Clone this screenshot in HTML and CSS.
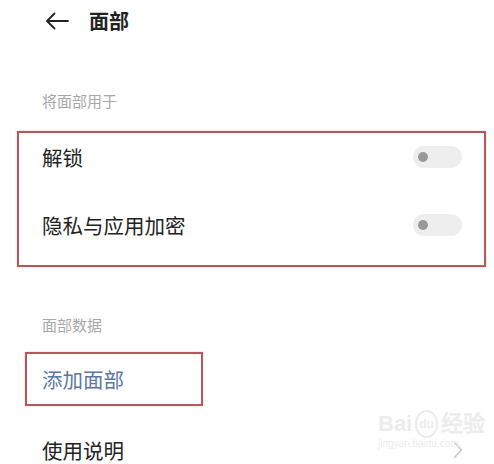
FILE: index.html
```html
<!DOCTYPE html>
<html lang="zh-CN">
<head>
  <meta charset="UTF-8">
  <meta name="viewport" content="width=device-width, initial-scale=1.0">
  <title>面部</title>
  <link rel="stylesheet" href="styles.css">
</head>
<body>
  <div class="header">
    <svg class="back" width="24" height="18" viewBox="0 0 24 18">
      <path d="M23 9H2M9.5 1.5L2 9l7.5 7.5" fill="none" stroke="#222" stroke-width="1.8" stroke-linecap="round" stroke-linejoin="round"/>
    </svg>
    <div class="title">面部</div>
  </div>

  <div class="section-title first">将面部用于</div>
  <div class="mark-box use-box">
    <div class="row">
      <span class="row-text">解锁</span>
      <span class="toggle"><span class="knob"></span></span>
    </div>
    <div class="row">
      <span class="row-text">隐私与应用加密</span>
      <span class="toggle"><span class="knob"></span></span>
    </div>
  </div>

  <div class="section-title second">面部数据</div>
  <div class="mark-box add-box">
    <span class="row-text link">添加面部</span>
  </div>

  <div class="row help-row">
    <span class="row-text">使用说明</span>
    <svg class="chevron" width="10" height="18" viewBox="0 0 10 18">
      <path d="M1.5 1.5L8.5 9l-7 7.5" fill="none" stroke="#c8c8c8" stroke-width="1.6" stroke-linecap="round" stroke-linejoin="round"/>
    </svg>
  </div>

  <div class="watermark">
    <div class="wm-top">Bai<span class="wm-paw">du</span>经验</div>
    <div class="wm-url">jingyan.baidu.com</div>
  </div>
</body>
</html>
```

FILE: styles.css
```css
body {
  margin: 0;
  background: #ffffff;
  color: #222222;
  font-family: "Noto Sans CJK SC", "Noto Sans", sans-serif;
  height: 464px;
  overflow: hidden;
  position: relative;
}
.header {
  height: 42px;
  display: flex;
  align-items: center;
  padding-left: 45px;
  gap: 20px;
}
.title {
  font-size: 20px;
  font-weight: 600;
  line-height: 24px;
}
.section-title {
  font-size: 15px;
  line-height: 20px;
  color: #a8a8a8;
  padding-left: 42px;
}
.section-title.first {
  margin-top: 49px;
}
.section-title.second {
  margin-top: 48px;
}
.mark-box {
  border: 2px solid #b5585c;
  box-shadow: 0 0 2px rgba(181, 88, 92, 0.35);
}
.use-box {
  margin: 20px 0 0 17px;
  height: 132px;
  padding: 0 22px 0 23px;
  width: 420px;
  display: flex;
  flex-direction: column;
  gap: 20px;
}
.row {
  height: 48px;
  display: flex;
  align-items: center;
  justify-content: space-between;
}
.row-text {
  font-size: 20.5px;
  line-height: 28px;
}
.toggle {
  width: 49px;
  height: 22px;
  border-radius: 11px;
  background: #eeeeee;
  display: flex;
  align-items: center;
  padding-left: 5px;
  box-sizing: border-box;
}
.knob {
  width: 10px;
  height: 10px;
  border-radius: 50%;
  background: #999999;
}
.add-box {
  margin: 17px 0 0 25px;
  width: 159px;
  height: 50px;
  padding-left: 15px;
  display: flex;
  align-items: center;
}
.link {
  color: #5a78a2;
}
.help-row {
  margin-top: 22px;
  padding: 0 31px 0 42px;
  height: 44px;
}
.watermark {
  position: absolute;
  left: 378px;
  top: 410px;
  color: #ececec;
  font-family: "Liberation Sans", sans-serif;
}
.wm-top {
  font-size: 22px;
  font-weight: bold;
  line-height: 24px;
  display: flex;
  align-items: center;
}
.wm-paw {
  font-size: 12px;
  border: 2px solid #ececec;
  border-radius: 50%;
  padding: 0 2px;
  margin: 0 3px;
}
.wm-url {
  font-size: 10px;
  line-height: 12px;
}
```
